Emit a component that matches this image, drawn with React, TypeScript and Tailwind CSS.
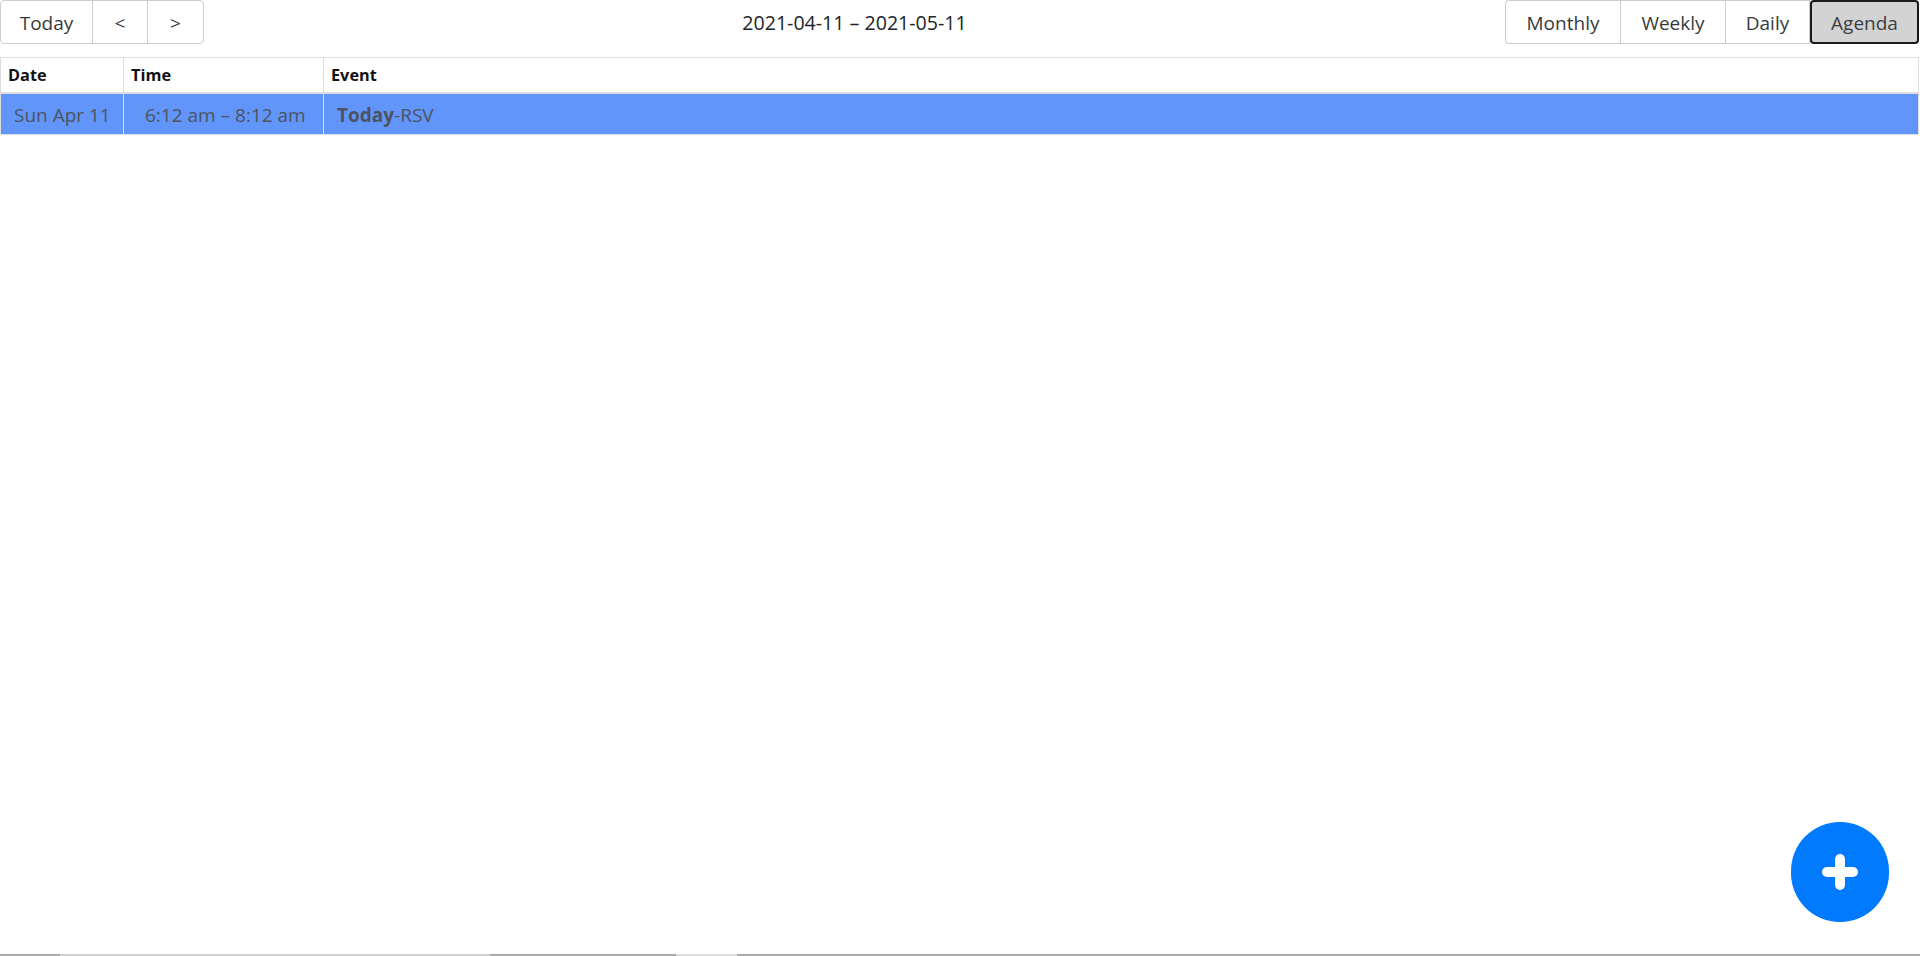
import React from "react";

export default function App() {
  const font = { fontFamily: '"Open Sans", "Noto Sans", "Liberation Sans", sans-serif' };
  return (
    <div className="relative h-[956px] w-[1920px] overflow-hidden bg-white text-[#373a3c]" style={font}>
      <div className="flex h-[44px] items-stretch">
        <div className="flex h-[44px] items-stretch rounded-[4px] border border-[#ccc] text-[19px]">
          <button className="w-[92px] border-r border-[#ccc] pt-[3px] text-[#373a3c]">Today</button>
          <button className="w-[55px] border-r border-[#ccc] pt-[2px] text-[#373a3c]">&lt;</button>
          <button className="w-[55px] pt-[2px] text-[#373a3c]">&gt;</button>
        </div>
        <div className="flex flex-1 items-center justify-center pt-[1px] text-[19.6px] text-[#212529]">
          2021-04-11 – 2021-05-11
        </div>
        <div className="flex h-[44px] items-stretch text-[19px]">
          <button className="w-[115px] rounded-l-[4px] border border-r-0 border-[#ccc] pt-[2px] text-[#373a3c]">Monthly</button>
          <button className="w-[105px] border border-r-0 border-[#ccc] pt-[2px] text-[#373a3c]">Weekly</button>
          <button className="w-[85px] border border-[#ccc] pt-[2px] text-[#373a3c]">Daily</button>
          <button className="w-[109px] rounded-[4px] border-2 border-[#1a1a1a] bg-[#d3d3d3] pt-[2px] text-[#3a3d40]">Agenda</button>
          <div className="w-[1px]" />
        </div>
      </div>
      <div className="mt-[13px] w-[1919px]">
        <table className="w-full border-collapse border border-[#ddd]">
          <thead>
            <tr className="h-[35px] border-b-2 border-[#ddd]">
              <th className="w-[123px] border-r border-[#ddd] px-[7px] text-left text-[16.3px] font-bold text-[#111]">Date</th>
              <th className="w-[200px] border-r border-[#ddd] px-[7px] text-left text-[16.3px] font-bold text-[#111]">Time</th>
              <th className="px-[7px] text-left text-[16.3px] font-bold text-[#111]">Event</th>
            </tr>
          </thead>
          <tbody>
            <tr className="h-[42px] bg-[#6195f9] text-[19px] text-[#4d5360]">
              <td className="border-r border-[#ddd] pl-[13px] pt-[3px] align-middle">Sun Apr 11</td>
              <td className="border-r border-[#ddd] pl-[21px] pt-[3px] align-middle">6:12 am – 8:12 am</td>
              <td className="pl-[13px] pt-[3px] align-middle">
                <span className="font-bold">Today</span>-RSV
              </td>
            </tr>
          </tbody>
        </table>
      </div>
      <button className="absolute left-[1791px] top-[822px] flex h-[100px] w-[98px] items-center justify-center rounded-full bg-[#007bff]">
        <svg width="36" height="36" viewBox="0 0 36 36">
          <path d="M18 5 V31 M5 18 H31" stroke="#fff" strokeWidth="10" strokeLinecap="round" />
        </svg>
      </button>
      <div className="absolute bottom-0 left-0 flex h-[2px] w-[1920px]">
        <div className="w-[60px] bg-[#aaa]" />
        <div className="w-[430px] bg-[#d0d0d0]" />
        <div className="w-[186px] bg-[#aaa]" />
        <div className="w-[61px] bg-[#dedede]" />
        <div className="flex-1 bg-[#aaa]" />
      </div>
    </div>
  );
}
